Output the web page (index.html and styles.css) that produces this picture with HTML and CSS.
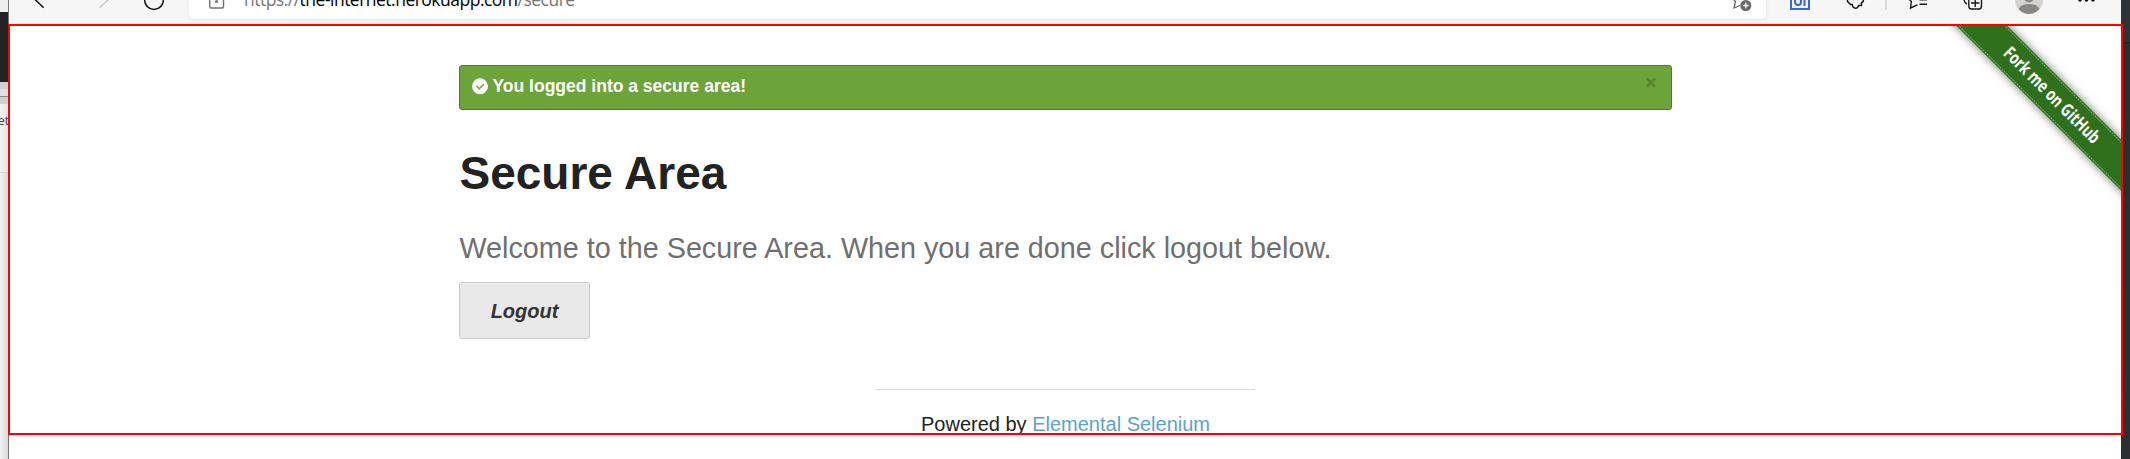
FILE: index.html
```html
<!DOCTYPE html>
<html lang="en">
<head>
<meta charset="utf-8">
<title>The Internet</title>
<link rel="stylesheet" href="styles.css">
</head>
<body>
<div class="desktop">
  <aside class="behind-left"><div class="dark"></div><div class="tabs"></div><div class="bar"></div><div class="snippet">et</div><div class="rest"></div></aside>
  <div class="window">
    <header class="toolbar">
      <svg class="nav" width="180" height="24" viewBox="9 0 180 24" fill="none" stroke="#111" stroke-width="1.5">
        <path d="M34.500 -1L43.700 7.700"/>
        <path stroke="#ccc" d="M109 -1L99.500 7.700"/>
        <circle cx="154" cy="0" r="9.400"/>
      </svg>
      <div class="address">
        <svg width="55" height="19" viewBox="189 0 55 19" fill="none" stroke="#707070" stroke-width="1.400">
          <path d="M209.700 -4V6.500Q209.700 8 211.200 8H222Q223.500 8 223.500 6.500V-4"/>
          <circle cx="216.500" cy="1.500" r="1.500" fill="#707070" stroke="none"/>
        </svg>
        <div class="url">https://<b>the-internet.herokuapp.com</b>/secure</div>
        <svg class="fav" width="40" height="19" viewBox="1726 0 40 19" fill="none" stroke="#666" stroke-width="1.300">
          <path d="M1733 -1L1735.500 1.500L1734 8L1740 5.500"/>
          <circle cx="1745.800" cy="5.500" r="5.500" fill="#666" stroke="none"/>
          <path stroke="#fff" d="M1742.800 5.500H1748.800M1745.800 2.500V8.500"/>
        </svg>
      </div>
      <svg class="tools" width="355" height="24" viewBox="1766 0 355 24" fill="none" stroke="#171717" stroke-width="1.500">
        <path stroke="#356bd8" stroke-width="2" d="M1791 -2V9H1809V-2"/>
        <path stroke="#356bd8" stroke-width="2" d="M1795 -2V2Q1795 5 1798 5T1801 2V-2M1804.500 -2V6"/>
        <path stroke-linejoin="round" d="M1847.500 -1V1.500L1850.500 4.500H1852.300C1852.500 6.800 1853.800 8.200 1855.500 8.200S1858.300 6.800 1858.500 5.500H1861.500V2.500C1864 2.300 1864 -.5 1861.500 -1"/>
        <path stroke="#cfcfcf" d="M1886 0V10"/>
        <path stroke-width="1.400" d="M1909 -1L1911.300 1.500L1910.500 8L1917.500 4.800M1919.500 -.2H1927M1919.500 4.200H1927"/>
        <path stroke-width="1.400" d="M1968.800 -2V6Q1968.800 9 1971.500 9H1979Q1981.500 9 1981.500 6V-2M1971 3H1979.500M1975.200 -1V7M1964 0Q1964.500 3 1967 4"/>
        <circle cx="2029" cy="0" r="14" fill="#d5d3cf" stroke="none"/>
        <circle cx="2029" cy="-2.500" r="5" fill="#8a8885" stroke="none"/>
        <path fill="#8a8885" stroke="none" d="M2018.500 9Q2021 4 2029 4T2039.500 9Q2035 14 2029 14T2018.500 9"/>
        <g fill="#111" stroke="none"><circle cx="2080" cy="0" r="1.800"/><circle cx="2086.500" cy="0" r="1.800"/><circle cx="2093" cy="0" r="1.800"/></g>
      </svg>
    </header>
    <main class="page">
      <div class="alert">
        <svg width="17" height="17" viewBox="0 0 17 17"><circle cx="8" cy="8.300" r="8" fill="#fff"/><path d="M4.300 8L7.200 10.700L11.800 6.200" fill="none" stroke="#6da33b" stroke-width="1.500"/></svg>
        <span class="message">You logged into a secure area!</span>
        <svg class="close" width="10" height="10" viewBox="0 0 10 10"><path d="M.9 .4L9.100 8.600M9.100 .4L.9 8.600" stroke="#588431" stroke-width="2.600"/></svg>
      </div>
      <h1>Secure Area</h1>
      <h4>Welcome to the Secure Area. When you are done click logout below.</h4>
      <a class="button">Logout</a>
      <footer><hr><div class="powered">Powered by <a>Elemental Selenium</a></div></footer>
      <svg class="ribbon" width="200" height="200" viewBox="0 0 200 200">
        <g transform="translate(130.500 69.500) rotate(45)">
          <g class="band"><rect x="-150" y="-18" width="300" height="36" fill="#2f701d"/></g>
          <path d="M-150 -16.300H150M-150 16.300H150" stroke="#72a765" stroke-width="1.200" stroke-dasharray="2 1"/>
          <text class="ribbon-text" x="-64" y="5.500" textLength="128" lengthAdjust="spacingAndGlyphs">Fork me on GitHub</text>
        </g>
      </svg>
    </main>
  </div>
  <aside class="behind-right"></aside>
  <div class="frame"></div>
</div>
</body>
</html>
```
FILE: styles.css
```css
* { box-sizing: border-box; }
body { margin: 0; font-family: "Liberation Sans", Arial, sans-serif; color: #222; background: #fff; }
.desktop { position: relative; display: grid; grid-template-columns: 9px 2112px 9px; width: 2130px; height: 459px; overflow: hidden; }
.behind-left { border-right: 1px solid #777; background: #eee; overflow: hidden; padding-top: 12px; }
.dark { height: 70px; background: #222; }
.tabs { height: 14px; background: linear-gradient(#ccd0d4 50%, #dfe0e3 50%); }
.bar { height: 8px; background: #cdcfd1; border-top: 1px solid #888; }
.snippet { height: 69px; padding-top: 8px; font: 12px/18px "Open Sans", sans-serif; color: #444; background: linear-gradient(90deg, #f3f3f3, #e4e4e4); border-bottom: 1px solid #d0d0d0; text-indent: -2px; }
.rest { height: 290px; background: linear-gradient(90deg, #f2f2f2, #dadada); }
.behind-right { background: linear-gradient(#2d3236 42px, #202224 42px, #202224 43px, #2b2d2f 44px, #2c3033 100%); }
.window { display: flex; flex-direction: column; overflow: hidden; background: #fff; }
.toolbar { display: flex; height: 24px; flex: none; background: #f6f6f6; }
.toolbar svg, .alert svg { display: block; flex: none; }
.address { display: flex; width: 1577px; height: 19px; background: #fff; border-radius: 0 0 5px 5px; box-shadow: 0 1px 4px #e5e5e5; }
.url { margin-top: -13px; font: 17.500px/24px "Open Sans", sans-serif; letter-spacing: -.51px; color: #767676; white-space: nowrap; }
.url b { font-weight: 400; color: #000; }
.fav { margin-left: auto; }
.page { position: relative; display: flex; flex-direction: column; align-items: flex-start; height: 411px; flex: none; padding: 41px 449px 0 450px; overflow: hidden; }
.page > * { flex: none; }
.alert { display: flex; align-items: flex-start; width: 1213px; height: 45px; padding: 12px 15px 0 12px; background: #6da33b; border: 1px solid #527b2c; border-radius: 3px; }
.message { margin-left: 3.500px; font-size: 17.500px; font-weight: 700; line-height: 16px; color: #fff; }
.close { margin-left: auto; }
h1 { margin: 33px 0 0 .5px; font-size: 46px; line-height: 60px; white-space: nowrap; }
h4 { margin: 25px 0 0 .5px; font-size: 28.750px; font-weight: 400; line-height: 40px; color: #6f6f6f; white-space: nowrap; }
.button { width: 131px; height: 57px; margin-top: 14px; border: 1px solid #c9c9c9; border-radius: 3px; background: #e9e9e9; box-shadow: inset 0 1px 0 #f3f3f3; color: #333; text-align: center; font: italic 700 20px/57px "Liberation Sans", sans-serif; }
footer { width: 379px; margin: 50px 0 0 417px; text-align: center; }
hr { height: 1px; margin: 0; border: 0; background: #d8d8d8; }
.powered { margin-top: 22px; font-size: 20px; line-height: 24px; white-space: nowrap; }
.powered a { color: #5da3c9; }
.ribbon { position: absolute; top: 2px; right: 0; }
.band { filter: drop-shadow(0 0 5px rgba(0, 0, 0, .55)); }
.ribbon-text { font: 700 18px "Open Sans", sans-serif; fill: #fff; }
.frame { position: absolute; left: 8px; top: 24px; width: 2115px; height: 411px; border: 2px solid #f00; }
```
